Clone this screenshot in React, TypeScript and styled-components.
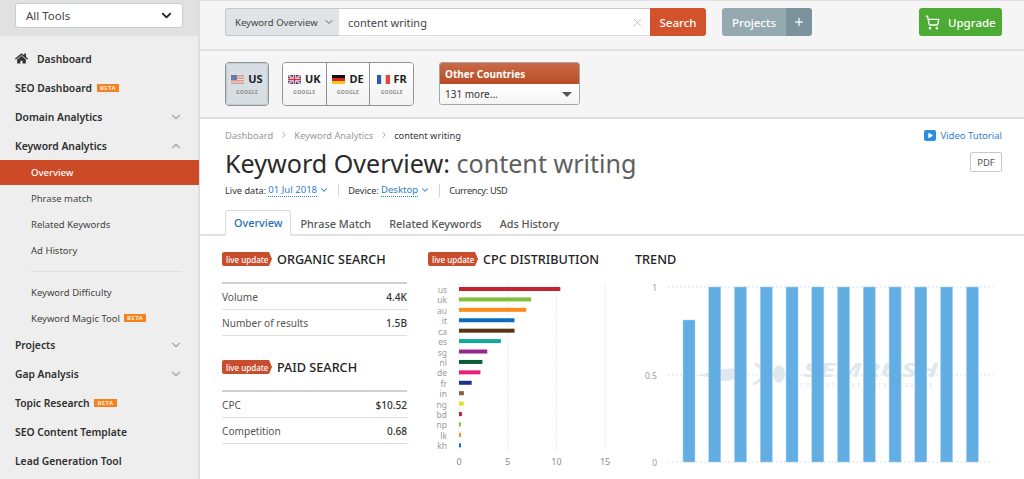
import React from "react";
import styled, { createGlobalStyle } from "styled-components";
import { FaHome, FaPlay } from "react-icons/fa";
import { ChevronDown, ChevronUp, ChevronRight, ShoppingCart, X, Plus } from "lucide-react";

const Global = createGlobalStyle`
  html, body { margin: 0; padding: 0; background: #fff; }
  body { font-family: "Noto Sans", "Open Sans", sans-serif; color: #333; }
  * { box-sizing: border-box; }
`;

const Page = styled.div`
  width: 1024px; height: 479px; overflow: hidden;
  display: grid; grid-template-columns: 200px 1fr;
`;
const Sidebar = styled.aside`
  background: #eeeeee; border-right: 2px solid #dedede;
  display: flex; flex-direction: column; height: 479px;
`;
const SideTop = styled.div`
  height: 36px; background: #e1e1e1; padding: 3px 15px 0 15px; flex: none;
`;
const ToolSelect = styled.div`
  height: 25px; background: #fff; border: 1px solid #c6ccd0; border-radius: 3px;
  display: flex; align-items: center; justify-content: space-between;
  padding: 0 8px 0 10px; font-size: 11.5px; color: #444;
`;
const Nav = styled.nav` padding-top: 8px; display: flex; flex-direction: column; `;
const NavLower = styled.div` margin-top: -1px; display: flex; flex-direction: column; `;
const TopItem = styled.div`
  height: 29px; padding: 0 15px; display: flex; align-items: center; gap: 4px;
  font-size: 10.3px; font-weight: 600; color: #2f2f2f; white-space: nowrap;
`;
const ChevronSlot = styled.span`
  margin-left: auto; display: flex; color: #a5a5a5;
`;
const HomeIcon = styled.span` display: flex; margin-right: 5px; color: #333; font-size: 13px; `;
const SubItem = styled.div<{ $active?: boolean }>`
  height: ${p => (p.$active ? 25 : 26)}px; padding: 0 0 0 31px; display: flex; align-items: center; gap: 3px;
  font-size: 9.5px; white-space: nowrap;
  margin-right: ${p => (p.$active ? "-1px" : "0")};
  background: ${p => (p.$active ? "#cc4a26" : "transparent")};
  color: ${p => (p.$active ? "#fff" : "#444")};
  font-weight: ${p => (p.$active ? 500 : 400)};
`;
const SideDivider = styled.div` height: 1px; background: #dedede; margin: 8px 16px 7px 31px; `;
const Beta = styled.span`
  background: #f5821f; color: #ffe9d2; font-size: 6px; font-weight: 700; letter-spacing: .4px;
  padding: 0 3px; line-height: 8px; height: 8px; display: inline-block; margin-left: 1px;
`;

const Main = styled.main` display: flex; flex-direction: column; min-width: 0; `;
const Header = styled.header`
  height: 51px; background: #f5f5f5; border-top: 1px solid #e2e2e2; border-bottom: 2px solid #dfdfdf;
  padding: 7px 22px 0 25px; display: flex; align-items: flex-start; flex: none;
`;
const SearchGroup = styled.div` display: flex; width: 481px; height: 28px; `;
const Scope = styled.div`
  width: 114px; background: #e0e4e7; border: 1px solid #c5c9cc; border-right: none; border-radius: 3px 0 0 3px;
  display: flex; align-items: center; gap: 5px; padding-left: 9px; font-size: 9.5px; color: #444; white-space: nowrap;
`;
const Query = styled.div`
  flex: 1; background: #fff; border-top: 1px solid #c9c9c9; border-bottom: 1px solid #dcdcdc;
  display: flex; align-items: center; justify-content: space-between; padding: 0 6px 0 9px; font-size: 11px; color: #444;
`;
const SearchButton = styled.div`
  width: 56px; background: #d2532b; color: #fff; font-size: 11.5px; font-weight: 500;
  border-radius: 0 3px 3px 0; display: flex; align-items: center; justify-content: center;
`;
const ProjectsGroup = styled.div`
  margin-left: 16px; width: 90px; height: 28px; display: flex; color: #fff; font-size: 11.5px; font-weight: 500;
  border-radius: 3px; overflow: hidden;
`;
const ProjectsLabel = styled.div` flex: 1; background: #95a9b1; display: flex; align-items: center; justify-content: center; `;
const ProjectsPlus = styled.div` width: 26px; background: #7c929c; display: flex; align-items: center; justify-content: center; `;
const Upgrade = styled.div`
  margin-left: auto; width: 83px; height: 28px; background: #4cab32; color: #fff; border-radius: 3px;
  display: flex; align-items: center; gap: 8px; padding-left: 6px; font-size: 11.5px; font-weight: 500;
`;

const CountryBar = styled.div`
  height: 68px; background: #f5f5f5; border-bottom: 2px solid #dfdfdf; flex: none;
  padding: 11px 0 0 25px; display: flex; align-items: flex-start;
`;
const CountryGroup = styled.div<{ $gap: number; $w: number }>`
  display: flex; margin-right: ${p => p.$gap}px; height: 44px; width: ${p => p.$w}px;
  border: 1px solid #8e9396; border-radius: 4px; overflow: hidden;
`;
const CountryCell = styled.div<{ $active?: boolean }>`
  flex: 1; display: flex; flex-direction: column; align-items: center; justify-content: center;
  background: ${p => (p.$active ? "#d7dee4" : "linear-gradient(#fff, #f2f2f2)")};
  & + & { border-left: 1px solid #8e9396; }
  ${p => p.$active && "box-shadow: inset 0 0 2px #8e9396;"}
`;
const CountryCode = styled.div`
  display: flex; align-items: center; gap: 4px; font-size: 11px; font-weight: 700; color: #222; line-height: 14px;
`;
const GoogleTag = styled.div` font-size: 5px; font-weight: 700; color: #8c8c8c; line-height: 8px; letter-spacing: .2px; margin-top: 2px; `;
const OtherBox = styled.div`
  width: 141px; height: 43px; border: 1px solid #a5a5a5; border-radius: 3px; overflow: hidden; background: #fff;
  display: flex; flex-direction: column;
`;
const OtherHead = styled.div`
  height: 21px; background: linear-gradient(#c96b48, #b84c24); color: #fff; font-size: 10px; font-weight: 700;
  padding-left: 5px; display: flex; align-items: center;
`;
const OtherBody = styled.div`
  flex: 1; display: flex; align-items: center; justify-content: space-between; padding: 0 6px 0 5px; font-size: 10px; color: #333;
  background: linear-gradient(#fff, #f4f4f4);
`;
const Caret = styled.span`
  width: 0; height: 0; border-left: 5px solid transparent; border-right: 5px solid transparent; border-top: 5px solid #555; margin-right: 1px;
`;

const Content = styled.section` padding: 0 22px 0 25px; flex: 1; position: relative; `;
const CrumbRow = styled.div` height: 32px; display: flex; align-items: center; justify-content: space-between; `;
const Crumbs = styled.div` display: flex; align-items: center; gap: 5.5px; font-size: 9.3px; color: #999; `;
const CrumbNow = styled.span` color: #333; `;
const VideoLink = styled.div` display: flex; align-items: center; gap: 4px; font-size: 9.5px; color: #2f80c8; `;
const VideoIcon = styled.span`
  width: 12px; height: 11px; background: #2e8ede; color: #fff; border-radius: 2px; font-size: 5px;
  display: flex; align-items: center; justify-content: center;
`;
const TitleRow = styled.div` display: flex; align-items: flex-start; justify-content: space-between; height: 27px; `;
const Title = styled.h1`
  margin: 0; font-size: 25.1px; line-height: 27px; font-weight: 400; color: #2b2b2b; white-space: nowrap; margin-top: -1px;
`;
const TitleQuery = styled.span` color: #5f5f5f; `;
const PdfButton = styled.div`
  width: 32px; height: 20px; border: 1px solid #c8c8c8; border-radius: 2px; font-size: 9.5px; color: #555;
  display: flex; align-items: center; justify-content: center; margin-top: 1px;
`;
const Meta = styled.div` height: 26px; display: flex; align-items: center; font-size: 9.2px; color: #333; margin-top: -1px; white-space: nowrap; `;
const MetaPart = styled.div`
  display: flex; align-items: center; gap: 2px; height: 13px;
  & + & { border-left: 1px solid #d5d5d5; margin-left: 9px; padding-left: 9px; }
`;
const CurrencyText = styled.span` letter-spacing: -.3px; `;
const MetaLink = styled.span` color: #2f80c8; border-bottom: 1px dotted #2f80c8; display: inline-flex; align-items: center; line-height: 12px; font-size: 9.6px; `;
const MetaChevron = styled.span` display: flex; color: #2f80c8; `;
const Tabs = styled.div`
  height: 33px; display: flex; align-items: flex-end; margin: 0 -22px 0 -25px; padding-left: 25px;
  border-bottom: 2px solid #e0e0e0; font-size: 10.85px; font-weight: 500; color: #555;
`;
const Tab = styled.div<{ $active?: boolean }>`
  height: 26px; padding: 0 ${p => (p.$active ? 8 : 9)}px; display: flex; align-items: center; white-space: nowrap;
  margin-bottom: -2px;
  ${p => p.$active && `
    color: #1f6fb5; background: #fff; border: 1px solid #dcdcdc; border-bottom: 2px solid #fff;
    border-radius: 3px 3px 0 0;
  `}
`;
const Columns = styled.div`
  display: grid; grid-template-columns: 185px 186px 1fr; column-gap: 21px; margin-left: -3px; padding-top: 15px;
`;
const HeadRow = styled.div` display: flex; align-items: center; gap: 5px; height: 16px; white-space: nowrap; `;
const LiveBadge = styled.span`
  position: relative; width: 47px; height: 14px; background: #c84d2c; color: #fff; font-size: 8px;
  border-radius: 2px 0 0 2px; display: flex; align-items: center; padding-left: 4px; margin-right: 3px; font-weight: 500;
  &::after {
    content: ""; position: absolute; left: 100%; top: 0; width: 0; height: 0;
    border-top: 7px solid transparent; border-bottom: 7px solid transparent; border-left: 3px solid #c84d2c;
  }
`;
const SectionTitle = styled.h2` margin: 0; font-size: 12.65px; line-height: 16px; font-weight: 500; color: #222; `;
const Stats = styled.div` margin-top: 15px; border-top: 2px solid #d0d0d0; `;
const StatRow = styled.div`
  height: 26px; display: flex; justify-content: space-between; align-items: center; font-size: 10.1px;
  border-bottom: 1px solid #dedede; color: #555;
`;
const StatValue = styled.span` color: #333; font-weight: 500; `;
const PaidHead = styled.div` margin-top: 23px; `;
const ChartBox = styled.div` margin-top: 13px; `;
const ChartSvg = styled.svg` display: block; overflow: visible; font-family: "Noto Sans", sans-serif; `;

const Flag = ({ c }: { c: "us" | "uk" | "de" | "fr" }) => (
  <svg width="13" height="9" viewBox="0 0 13 9">
    {c === "us" && (
      <>
        <rect width="13" height="9" fill="#d99a92" />
        <rect y="1.5" width="13" height="1" fill="#f0e0dc" />
        <rect y="4" width="13" height="1" fill="#f0e0dc" />
        <rect y="6.5" width="13" height="1" fill="#f0e0dc" />
        <rect width="6" height="5" fill="#6a7aa0" />
      </>
    )}
    {c === "uk" && (
      <>
        <rect width="13" height="9" fill="#3c4f96" />
        <path d="M0 0L13 9M13 0L0 9" stroke="#fff" strokeWidth="1.6" />
        <path d="M0 0L13 9M13 0L0 9" stroke="#d0313d" strokeWidth=".6" />
        <path d="M6.5 0V9M0 4.5H13" stroke="#fff" strokeWidth="2.6" />
        <path d="M6.5 0V9M0 4.5H13" stroke="#d0313d" strokeWidth="1.4" />
      </>
    )}
    {c === "de" && (
      <>
        <rect width="13" height="3" fill="#111" />
        <rect y="3" width="13" height="3" fill="#d8281e" />
        <rect y="6" width="13" height="3" fill="#f5c518" />
      </>
    )}
    {c === "fr" && (
      <>
        <rect width="4.4" height="9" fill="#2a5db0" />
        <rect x="4.4" width="4.3" height="9" fill="#f5f5f5" />
        <rect x="8.7" width="4.3" height="9" fill="#e2463f" />
      </>
    )}
  </svg>
);

const cpc: [string, number, string][] = [
  ["us", 10.4, "#c4242e"], ["uk", 7.4, "#80bf3a"], ["au", 6.9, "#ff8a1c"], ["it", 5.7, "#0c6dc0"],
  ["ca", 5.7, "#5b3513"], ["es", 4.3, "#10a898"], ["sg", 2.9, "#92278f"], ["nl", 2.4, "#0c5e32"],
  ["de", 2.2, "#ec1c7a"], ["fr", 1.3, "#1f2f8e"], ["in", 0.5, "#8a5c40"], ["ng", 0.5, "#dde229"],
  ["bd", 0.3, "#c8202a"], ["np", 0.2, "#80bf3a"], ["lk", 0.2, "#ff8a1c"], ["kh", 0.2, "#0c6dc0"],
];

const CpcChart = () => {
  const x0 = 31; const scale = 9.74; const top = 4;
  return (
    <ChartSvg width="200" height="190" viewBox="0 0 200 190">
      {[0, 5, 10, 15].map(t => (
        <g key={t}>
          <line x1={x0 + t * scale} x2={x0 + t * scale} y1={top} y2={172} stroke="#d7e6f0" strokeDasharray="1.5 1.5" />
          <text x={x0 + t * scale} y={185} fontSize="9" fill="#8a8a8a" textAnchor="middle">{t}</text>
        </g>
      ))}
      {cpc.map(([name, v, col], i) => {
        const cy = top + 5 + i * 10.42;
        return (
          <g key={name}>
            <text x={19} y={cy + 4} fontSize="8.5" fill="#9a9a9a" textAnchor="end">{name}</text>
            <rect x={x0} y={cy - 2} width={v * scale} height={4} fill={col} />
          </g>
        );
      })}
    </ChartSvg>
  );
};

const TrendChart = () => {
  const ys: [string, number][] = [["1", 7], ["0.5", 95], ["0", 182]];
  return (
    <ChartSvg width="365" height="190" viewBox="0 0 365 190">
      {ys.map(([l, y]) => (
        <g key={l}>
          <line x1={33} x2={358} y1={y} y2={y} stroke="#d5e3ec" strokeDasharray="2 2" />
          <text x={22} y={y + 3.5} fontSize="8.5" fill="#9a9a9a" textAnchor="end">{l}</text>
        </g>
      ))}
      <g fill="#e0e8ee">
        <ellipse cx="144" cy="94" rx="6" ry="9" />
        <path d="M62 96 C80 90 95 86 110 90 C104 98 92 104 84 100 C78 97 70 96 62 96Z" />
        <path d="M120 84 C130 88 130 100 118 104" fill="none" stroke="#e0e8ee" strokeWidth="3" />
        <text x="168" y="97" fontSize="19" fontWeight="700" fontStyle="italic" textLength="135" lengthAdjust="spacingAndGlyphs">SEMRUSH</text>
        <text x="165" y="107" fontSize="5.5" textLength="132">COMPETITIVE INTELLIGENCE</text>
      </g>
      {Array.from({ length: 12 }).map((_, i) => {
        const h = i === 0 ? 142 : 175;
        return <rect key={i} x={48 + i * 25.76} y={182 - h} width={12} height={h} fill="#62aee2" stroke="#a8d2ef" strokeWidth=".5" />;
      })}
    </ChartSvg>
  );
};

const Chevron = () => (
  <ChevronSlot><ChevronDown size={14} strokeWidth={2} /></ChevronSlot>
);

export default function App() {
  return (
    <Page>
      <Global />
      <Sidebar>
        <SideTop>
          <ToolSelect>All Tools <ChevronDown size={15} strokeWidth={3} color="#222" /></ToolSelect>
        </SideTop>
        <Nav>
          <TopItem><HomeIcon><FaHome /></HomeIcon>Dashboard</TopItem>
          <TopItem>SEO Dashboard <Beta>BETA</Beta></TopItem>
          <TopItem>Domain Analytics<Chevron /></TopItem>
          <TopItem>Keyword Analytics<ChevronSlot><ChevronUp size={14} strokeWidth={2} /></ChevronSlot></TopItem>
          <SubItem $active>Overview</SubItem>
          <SubItem>Phrase match</SubItem>
          <SubItem>Related Keywords</SubItem>
          <SubItem>Ad History</SubItem>
          <SideDivider />
          <SubItem>Keyword Difficulty</SubItem>
          <SubItem>Keyword Magic Tool <Beta>BETA</Beta></SubItem>
          <NavLower>
            <TopItem>Projects<Chevron /></TopItem>
            <TopItem>Gap Analysis<Chevron /></TopItem>
            <TopItem>Topic Research <Beta>BETA</Beta></TopItem>
            <TopItem>SEO Content Template</TopItem>
            <TopItem>Lead Generation Tool</TopItem>
          </NavLower>
        </Nav>
      </Sidebar>
      <Main>
        <Header>
          <SearchGroup>
            <Scope>Keyword Overview <ChevronDown size={12} strokeWidth={2} color="#666" /></Scope>
            <Query>content writing <X size={13} color="#bdbdbd" strokeWidth={1.6} /></Query>
            <SearchButton>Search</SearchButton>
          </SearchGroup>
          <ProjectsGroup>
            <ProjectsLabel>Projects</ProjectsLabel>
            <ProjectsPlus><Plus size={12} strokeWidth={2.5} /></ProjectsPlus>
          </ProjectsGroup>
          <Upgrade><ShoppingCart size={15} strokeWidth={2.2} />Upgrade</Upgrade>
        </Header>
        <CountryBar>
          <CountryGroup $gap={13} $w={44}>
            <CountryCell $active>
              <CountryCode><Flag c="us" />US</CountryCode>
              <GoogleTag>GOOGLE</GoogleTag>
            </CountryCell>
          </CountryGroup>
          <CountryGroup $gap={25} $w={132}>
            <CountryCell><CountryCode><Flag c="uk" />UK</CountryCode><GoogleTag>GOOGLE</GoogleTag></CountryCell>
            <CountryCell><CountryCode><Flag c="de" />DE</CountryCode><GoogleTag>GOOGLE</GoogleTag></CountryCell>
            <CountryCell><CountryCode><Flag c="fr" />FR</CountryCode><GoogleTag>GOOGLE</GoogleTag></CountryCell>
          </CountryGroup>
          <OtherBox>
            <OtherHead>Other Countries</OtherHead>
            <OtherBody>131 more... <Caret /></OtherBody>
          </OtherBox>
        </CountryBar>
        <Content>
          <CrumbRow>
            <Crumbs>
              <span>Dashboard</span><ChevronRight size={10} />
              <span>Keyword Analytics</span><ChevronRight size={10} />
              <CrumbNow>content writing</CrumbNow>
            </Crumbs>
            <VideoLink><VideoIcon><FaPlay /></VideoIcon>Video Tutorial</VideoLink>
          </CrumbRow>
          <TitleRow>
            <Title>Keyword Overview: <TitleQuery>content writing</TitleQuery></Title>
            <PdfButton>PDF</PdfButton>
          </TitleRow>
          <Meta>
            <MetaPart>Live data: <MetaLink>01 Jul 2018</MetaLink><MetaChevron><ChevronDown size={10} strokeWidth={2.5} /></MetaChevron></MetaPart>
            <MetaPart>Device: <MetaLink>Desktop</MetaLink><MetaChevron><ChevronDown size={10} strokeWidth={2.5} /></MetaChevron></MetaPart>
            <MetaPart><CurrencyText>Currency: USD</CurrencyText></MetaPart>
          </Meta>
          <Tabs>
            <Tab $active>Overview</Tab>
            <Tab>Phrase Match</Tab>
            <Tab>Related Keywords</Tab>
            <Tab>Ads History</Tab>
          </Tabs>
          <Columns>
            <div>
              <HeadRow><LiveBadge>live update</LiveBadge><SectionTitle>ORGANIC SEARCH</SectionTitle></HeadRow>
              <Stats>
                <StatRow>Volume<StatValue>4.4K</StatValue></StatRow>
                <StatRow>Number of results<StatValue>1.5B</StatValue></StatRow>
              </Stats>
              <PaidHead>
                <HeadRow><LiveBadge>live update</LiveBadge><SectionTitle>PAID SEARCH</SectionTitle></HeadRow>
              </PaidHead>
              <Stats>
                <StatRow>CPC<StatValue>$10.52</StatValue></StatRow>
                <StatRow>Competition<StatValue>0.68</StatValue></StatRow>
              </Stats>
            </div>
            <div>
              <HeadRow><LiveBadge>live update</LiveBadge><SectionTitle>CPC DISTRIBUTION</SectionTitle></HeadRow>
              <ChartBox><CpcChart /></ChartBox>
            </div>
            <div>
              <HeadRow><SectionTitle>TREND</SectionTitle></HeadRow>
              <ChartBox><TrendChart /></ChartBox>
            </div>
          </Columns>
        </Content>
      </Main>
    </Page>
  );
}
